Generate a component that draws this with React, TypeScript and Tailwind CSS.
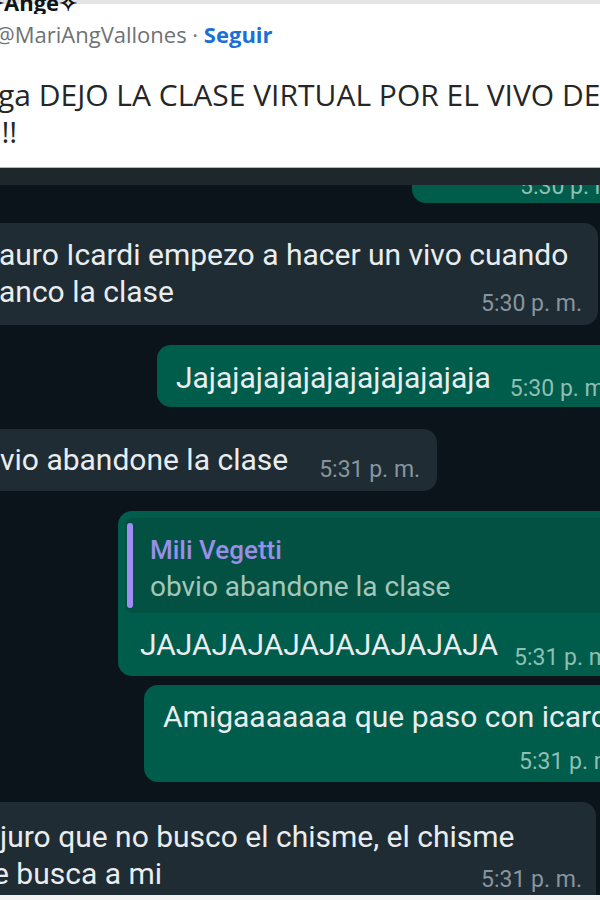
export default function App() {
  return (
    <div className="w-[600px] h-[900px] overflow-hidden bg-white flex flex-col font-['Roboto',sans-serif]">
      {/* tweet header */}
      <div className="h-[167px] shrink-0 overflow-hidden bg-[linear-gradient(#e4e4e4_0_4px,#ffffff_4px)] font-['Open_Sans',sans-serif]">
        <div className="h-[14px] overflow-hidden">
          <div className="-mt-[13px] -ml-[14px] text-[22px] font-bold leading-[30px] text-[#0f1419] whitespace-nowrap">✧Ange✧</div>
        </div>
        <div className="mt-[6px] -ml-[5px] text-[22px] leading-[28px] text-[#6e7275] whitespace-nowrap">
          @MariAngVallones · <span className="font-bold text-[#1b6fd8]">Seguir</span>
        </div>
        <div className="mt-[28px] text-[30px] leading-[37px] text-[#262626] whitespace-nowrap">
          <div className="-ml-[2px]">ga DEJO LA CLASE VIRTUAL POR EL VIVO DE</div>
          <div className="-ml-[7px]">I!!</div>
        </div>
      </div>

      {/* chat screenshot */}
      <div className="flex-1 flex flex-col border-t border-[#b5babd] overflow-hidden bg-[#0b141a]">
        <div className="h-[17px] shrink-0 bg-[#1e272c]" />
        <div className="flex-1 flex flex-col overflow-hidden text-[30px] leading-[37px] text-[#e9edef] whitespace-nowrap">
          {/* cut outgoing */}
          <div className="ml-[412px] w-[188px] h-[18px] shrink-0 overflow-hidden rounded-bl-[14px] bg-[#005c4b]">
            <div className="-mt-[10px] ml-[108px] text-[23px] leading-[24px] text-[#8fbfb2]">5:30 p. m.</div>
          </div>

          <div className="mt-[20px] -ml-[20px] w-[618px] shrink-0 rounded-[14px] bg-[#1f2c33] pl-[19px] pr-[16px] pt-[13px] pb-[15px]">
            <div>auro Icardi empezo a hacer un vivo cuando</div>
            <div className="flex items-end justify-between">
              <span>anco la clase</span>
              <span className="-mb-[6px] text-[23px] leading-[24px] text-[#8696a0]">5:30 p. m.</span>
            </div>
          </div>

          <div className="mt-[20px] ml-[157px] w-max shrink-0 flex items-end rounded-[14px] bg-[#005c4b] pl-[19px] pr-[20px] pt-[14px] pb-[11px]">
            <span>Jajajajajajajajajajajajaja</span>
            <span className="ml-[19px] -mb-[5px] text-[23px] leading-[24px] text-[#8fbfb2]">5:30 p. m.</span>
          </div>

          <div className="mt-[22px] -ml-[20px] self-start shrink-0 flex items-end rounded-[14px] bg-[#1f2c33] pl-[20px] pr-[17px] pt-[12px] pb-[13px]">
            <span>vio abandone la clase</span>
            <span className="ml-[31px] -mb-[4px] text-[23px] leading-[24px] text-[#8696a0]">5:31 p. m.</span>
          </div>

          <div className="mt-[20px] ml-[118px] w-max min-w-[520px] shrink-0 rounded-[14px] bg-[#005c4b] p-[7px] pb-[13px]">
            <div className="flex rounded-[8px] bg-[#025143] py-[5px]">
              <div className="ml-[2px] w-[6px] rounded-full bg-[#a08ef2]" />
              <div className="pl-[17px] pt-[9px] pb-[2px]">
                <div className="text-[26px] leading-[36px] font-medium text-[#9a8ee6]">Mili Vegetti</div>
                <div className="text-[28px] leading-[38px] text-[#a3c7ba]">obvio abandone la clase</div>
              </div>
            </div>
            <div className="mt-[13px] flex items-end pl-[15px]">
              <span>JAJAJAJAJAJAJAJAJAJA</span>
              <span className="ml-[16px] -mb-[7px] text-[23px] leading-[24px] text-[#8fbfb2]">5:31 p. m.</span>
            </div>
          </div>

          <div className="mt-[9px] ml-[144px] w-max min-w-[500px] shrink-0 rounded-[14px] bg-[#005c4b] pl-[19px] pt-[13px] pb-[8px]">
            <div>Amigaaaaaaa que paso con icardi</div>
            <div className="mt-[15px] pl-[356px] text-[23px] leading-[24px] text-[#8fbfb2]">5:31 p. m.</div>
          </div>

          <div className="mt-[20px] -ml-[20px] w-[616px] shrink-0 rounded-t-[14px] bg-[#1f2c33] pl-[20px] pr-[14px] pt-[16px] pb-[20px]">
            <div>juro que no busco el chisme, el chisme</div>
            <div className="flex items-end justify-between">
              <span className="-ml-[7px]">e busca a mi</span>
              <span className="text-[23px] leading-[24px] text-[#8696a0]">5:31 p. m.</span>
            </div>
          </div>
        </div>
      </div>
      <div className="h-[5px] shrink-0 bg-[#f3f3f3]" />
    </div>
  )
}
